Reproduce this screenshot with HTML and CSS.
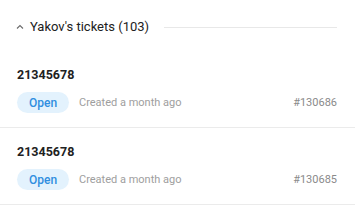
FILE: index.html
```html
<!DOCTYPE html>
<html>
<head>
<meta charset="utf-8">
<link rel="stylesheet" href="styles.css">
</head>
<body>
<div class="panel">
  <div class="section-head">
    <svg class="chev" width="8" height="6" viewBox="0 0 8 6"><polyline points="1,4.5 4,1.5 7,4.5" fill="none" stroke="#6b6b6b" stroke-width="1.1"/></svg>
    <span class="section-title">Yakov's tickets (103)</span>
    <span class="rule"></span>
  </div>
  <div class="ticket">
    <div class="ticket-title">21345678</div>
    <div class="ticket-meta">
      <span class="badge">Open</span>
      <span class="created">Created a month ago</span>
      <span class="num">#130686</span>
    </div>
  </div>
  <div class="ticket">
    <div class="ticket-title">21345678</div>
    <div class="ticket-meta">
      <span class="badge">Open</span>
      <span class="created">Created a month ago</span>
      <span class="num">#130685</span>
    </div>
  </div>
</div>
</body>
</html>
```
FILE: styles.css
```css
html, body {
  margin: 0;
  padding: 0;
  background: #fff;
}
body {
  font-family: Roboto, "Liberation Sans", sans-serif;
  color: #212121;
}
.panel {
  width: 355px;
  padding-top: 15px;
}
.section-head {
  display: flex;
  align-items: center;
  height: 24px;
  padding: 0 18px 0 16px;
  margin-bottom: 12px;
}
.chev {
  display: block;
  margin-right: 6px;
}
.section-title {
  font-size: 13px;
  line-height: 24px;
  color: #212121;
  white-space: nowrap;
}
.rule {
  flex: 1;
  height: 1px;
  background: #e8e8e8;
  margin-left: 15px;
}
.ticket {
  padding: 16px 18px 14px 17px;
  border-bottom: 1px solid #ebebeb;
}
.ticket-title {
  font-size: 12.5px;
  line-height: 15px;
  font-weight: 700;
  color: #212121;
}
.ticket-meta {
  display: flex;
  align-items: center;
  margin-top: 10px;
}
.badge {
  display: inline-flex;
  align-items: center;
  justify-content: center;
  height: 21px;
  width: 52px;
  border-radius: 11px;
  background: #e3f2fd;
  color: #2f8ee0;
  font-size: 12px;
  font-weight: 500;
}
.created {
  margin-left: 10px;
  font-size: 11px;
  color: #9e9e9e;
}
.num {
  margin-left: auto;
  font-size: 11px;
  color: #8a8a8a;
}
```
